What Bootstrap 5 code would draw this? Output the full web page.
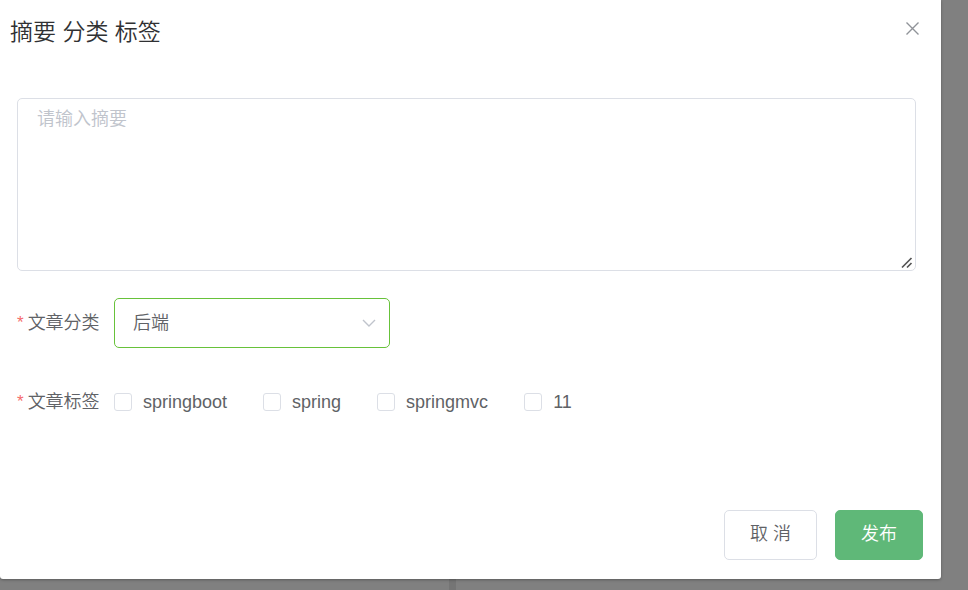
<!DOCTYPE html>
<html lang="zh-CN">
<head>
<meta charset="utf-8">
<meta name="viewport" content="width=device-width, initial-scale=1">
<title>摘要 分类 标签</title>
<link href="https://cdn.jsdelivr.net/npm/bootstrap@5.3.0/dist/css/bootstrap.min.css" rel="stylesheet">
<style>
  body {
    font-family: "Liberation Sans", "Noto Sans CJK SC", sans-serif;
    font-size: 18px;
    line-height: 24px;
    color: #606266;
    min-height: 100vh;
    /* page columns seen through the dimming layer */
    background: linear-gradient(90deg, #808080 449px, #757575 449px 456px, #808080 456px);
  }
  .publish-dialog {
    margin-right: 27px;
    padding-bottom: 19px;
    border-radius: 0 0 3px 3px;
    box-shadow: 0 1px 3px rgba(0, 0, 0, .3);
  }
  .dialog-head { padding: 16px 19px 0 10px; }
  .dialog-title { font-size: 23px; line-height: 32px; font-weight: 350; color: #303133; }
  .dialog-close { width: 18px; height: 18px; margin-top: 4px; color: #909399; }
  .dialog-form { padding: 50px 25px 0 17px; }
  .dialog-form .cjk, .dialog-foot .cjk { font-weight: 350; }
  .dialog-form .form-control, .dialog-form .form-select {
    border-color: #dcdfe6;
    border-radius: 5px;
    font-size: 18px;
    color: #606266;
    box-shadow: none;
  }
  .dialog-form textarea.form-control { height: 173px; padding: 7px 19px; line-height: 27px; resize: vertical; }
  .dialog-form textarea::placeholder { color: #c0c4cc; }
  textarea::-webkit-resizer { background: transparent; }
  .grip { right: 3px; bottom: 2px; pointer-events: none; }
  .field-row { display: grid; grid-template-columns: 97px minmax(0, 1fr); align-items: center; }
  .field-category { margin-top: 27px; }
  .field-tags { margin-top: 29px; min-height: 50px; }
  .field-name { white-space: nowrap; }
  .star { color: #f56c6c; font-size: 17px; line-height: 1; vertical-align: 1px; margin-right: 4px; }
  .dialog-form .form-select {
    width: 276px;
    height: 50px;
    padding: 1px 40px 0 18px;
    border-color: #67c23a;
    background-image: none;
  }
  .select-arrow { right: 13px; top: 17px; color: #c0c4cc; pointer-events: none; }
  .tag-list { column-gap: 36px; }
  .tag-list .form-check-input { width: 18px; height: 18px; margin: 0; border: 1px solid #dcdfe6; border-radius: 3px; }
  .tag-item { gap: 11px; }
  .dialog-foot { padding: 83px 18px 0; gap: 18px; }
  .dialog-foot .btn { height: 50px; padding: 0 25px 2px; font-size: 18px; border-radius: 5px; }
  .btn-cancel, .btn-cancel:hover { background: #fff; border-color: #dcdfe6; color: #606266; }
  .btn-publish, .btn-publish:hover { background: #5fb878; border-color: #5fb878; color: #fff; }
</style>
<script src="https://cdn.jsdelivr.net/npm/bootstrap@5.3.0/dist/js/bootstrap.bundle.min.js"></script>
</head>
<body>
<form class="publish-dialog bg-white" role="dialog" aria-labelledby="dialog-title">
  <header class="dialog-head d-flex justify-content-between align-items-start">
    <h1 class="dialog-title mb-0" id="dialog-title">摘要 分类 标签</h1>
    <button type="button" class="dialog-close btn p-0 border-0 d-flex" aria-label="关闭">
      <svg width="18" height="18" viewBox="0 0 18 18" fill="none" stroke="currentColor" stroke-width="1.4"><path d="M2.5 2.5l12 12M14.5 2.5L2.5 14.5"/></svg>
    </button>
  </header>
  <div class="dialog-form">
    <div class="position-relative">
      <textarea class="form-control cjk d-block" aria-label="摘要" placeholder="请输入摘要"></textarea>
      <svg class="grip position-absolute" width="12" height="12" viewBox="0 0 12 12" fill="none" stroke="#555" stroke-width="1.7"><path d="M1 10.5L10.5 1M6 10.5L10.5 6"/></svg>
    </div>
    <div class="field-row field-category">
      <label class="field-name cjk" for="category"><span class="star">*</span>文章分类</label>
      <div class="d-flex">
        <div class="position-relative">
          <select class="form-select cjk" id="category"><option>后端</option></select>
          <svg class="select-arrow position-absolute" width="16" height="16" viewBox="0 0 16 16" fill="none" stroke="currentColor" stroke-width="1.4"><path d="M2 5l6 6 6-6"/></svg>
        </div>
      </div>
    </div>
    <div class="field-row field-tags" role="group" aria-labelledby="tags-name">
      <span class="field-name cjk" id="tags-name"><span class="star">*</span>文章标签</span>
      <div class="tag-list d-flex flex-wrap">
        <label class="tag-item d-flex align-items-center"><input class="form-check-input" type="checkbox">springboot</label>
        <label class="tag-item d-flex align-items-center"><input class="form-check-input" type="checkbox">spring</label>
        <label class="tag-item d-flex align-items-center"><input class="form-check-input" type="checkbox">springmvc</label>
        <label class="tag-item d-flex align-items-center"><input class="form-check-input" type="checkbox">11</label>
      </div>
    </div>
  </div>
  <footer class="dialog-foot d-flex justify-content-end">
    <button type="button" class="btn btn-cancel cjk">取 消</button>
    <button type="submit" class="btn btn-publish cjk">发布</button>
  </footer>
</form>
</body>
</html>
